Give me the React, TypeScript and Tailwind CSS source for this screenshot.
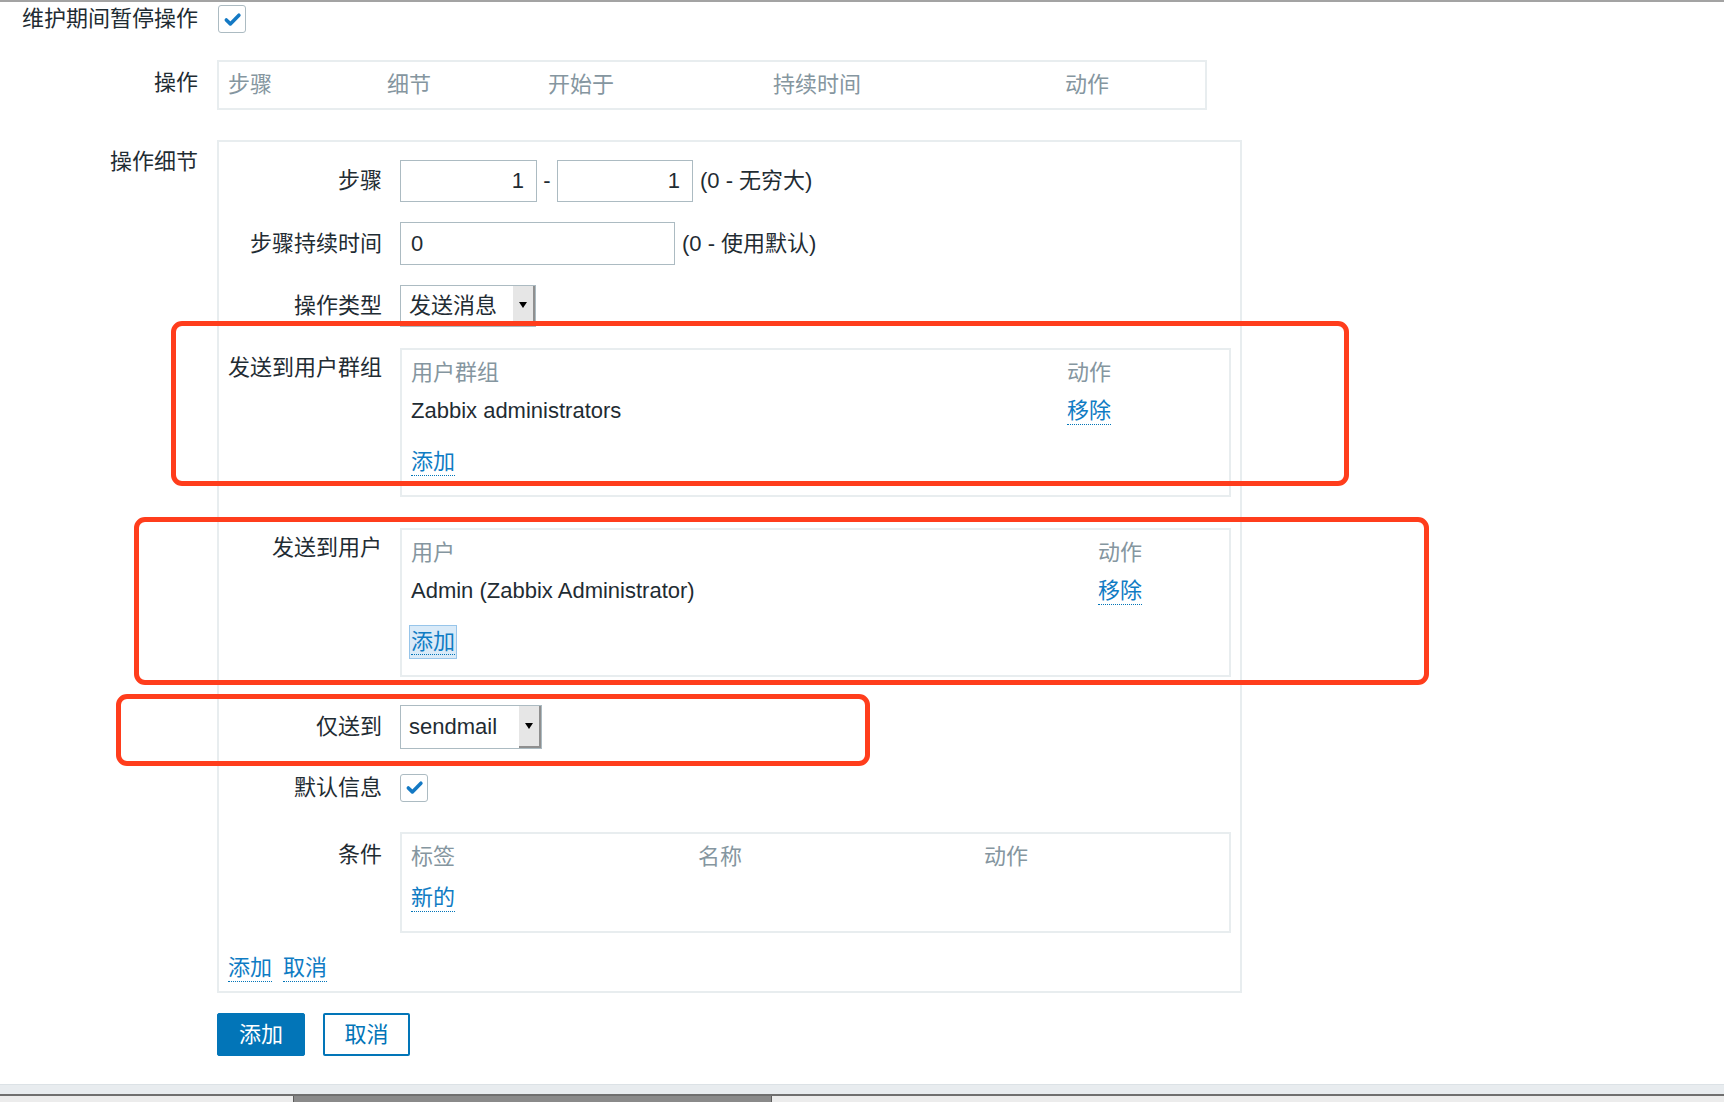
import React from "react";

function Check() {
  return (
    <span className="flex h-[28px] w-[28px] items-center justify-center rounded-[3px] border border-[#acbbc2] bg-white">
      <svg viewBox="0 0 16 16" className="h-[19px] w-[19px]">
        <path d="M2.8 8.4l3.4 3.3L13.4 4.4" fill="none" stroke="#1479c4" strokeWidth="3" strokeLinecap="round" strokeLinejoin="round" />
      </svg>
    </span>
  );
}

function Select({ value, className }: { value: string; className: string }) {
  return (
    <div className={"flex items-stretch border border-[#acbbc2] bg-white " + className}>
      <span className="flex flex-1 items-center pl-[8px]">{value}</span>
      <span className="flex w-[22px] items-center justify-center border-r-2 border-b-2 border-[#8f8f8f] bg-[#e6e6e6]">
        <span className="h-0 w-0 border-x-[4px] border-t-[6px] border-x-transparent border-t-black" />
      </span>
    </div>
  );
}

function Link({ children }: { children: React.ReactNode }) {
  return <span className="border-b border-dotted border-[#0275b8] leading-[26px] text-[#0f7cc4]">{children}</span>;
}

function Label({ children, className }: { children: React.ReactNode; className: string }) {
  return <div className={"w-[154px] shrink-0 text-right " + className}>{children}</div>;
}

export default function App() {
  return (
    <div className="relative flex h-[1102px] flex-col overflow-hidden border-t-2 border-[#a3a3a3] bg-white font-[family-name:'Liberation_Sans','Noto_Sans_CJK_SC',sans-serif] text-[22px] leading-[28px] text-[#1f2c33]">
      <div className="flex-1">
        {/* maintenance checkbox */}
        <div className="flex h-[34px] items-center">
          <div className="w-[198px] text-right">维护期间暂停操作</div>
          <div className="ml-[20px]">
            <Check />
          </div>
        </div>

        {/* operations list */}
        <div className="mt-[24px] flex items-start">
          <div className="w-[198px] pt-[9px] text-right">操作</div>
          <div className="ml-[19px] flex h-[50px] w-[990px] items-center border-2 border-[#e8edef] pl-[9px] text-[#8596a0]">
            <div className="w-[159px]">步骤</div>
            <div className="w-[161px]">细节</div>
            <div className="w-[225px]">开始于</div>
            <div className="w-[292px]">持续时间</div>
            <div>动作</div>
          </div>
        </div>

        {/* operation details */}
        <div className="mt-[30px] flex items-start">
          <div className="w-[198px] pt-[8px] text-right">操作细节</div>
          <div className="ml-[19px] w-[1025px] border-2 border-[#e8edef] px-[9px] pt-[18px] pb-[9px]">
            <div className="flex h-[42px] items-center">
              <Label className="">步骤</Label>
              <div className="ml-[18px] flex items-center">
                <div className="flex h-[42px] w-[137px] items-center justify-end border border-[#acbbc2] pr-[12px]">1</div>
                <span className="w-[20px] text-center">-</span>
                <div className="flex h-[42px] w-[136px] items-center justify-end border border-[#acbbc2] pr-[12px]">1</div>
                <span className="ml-[7px]">(0 - 无穷大)</span>
              </div>
            </div>

            <div className="mt-[20px] flex h-[43px] items-center">
              <Label className="">步骤持续时间</Label>
              <div className="ml-[18px] flex items-center">
                <div className="flex h-[43px] w-[275px] items-center border border-[#acbbc2] pl-[10px]">0</div>
                <span className="ml-[7px]">(0 - 使用默认)</span>
              </div>
            </div>

            <div className="mt-[20px] flex h-[42px] items-center">
              <Label className="">操作类型</Label>
              <div className="ml-[18px]">
                <Select value="发送消息" className="h-[42px] w-[136px]" />
              </div>
            </div>

            <div className="mt-[21px] flex items-start">
              <Label className="pt-[6px]">发送到用户群组</Label>
              <div className="ml-[18px] w-[831px] border-2 border-[#e8edef] px-[9px] pt-[7px] pb-[13px]">
                <div className="flex h-[32px] items-center text-[#8596a0]">
                  <div className="w-[656px]">用户群组</div>
                  <div>动作</div>
                </div>
                <div className="flex h-[44px] items-center">
                  <div className="w-[656px]">Zabbix administrators</div>
                  <Link>移除</Link>
                </div>
                <div className="mt-[9px] flex h-[40px] items-center">
                  <Link>添加</Link>
                </div>
              </div>
            </div>

            <div className="mt-[31px] flex items-start">
              <Label className="pt-[6px]">发送到用户</Label>
              <div className="ml-[18px] w-[831px] border-2 border-[#e8edef] px-[9px] pt-[7px] pb-[13px]">
                <div className="flex h-[32px] items-center text-[#8596a0]">
                  <div className="w-[687px]">用户</div>
                  <div>动作</div>
                </div>
                <div className="flex h-[44px] items-center">
                  <div className="w-[687px]">Admin (Zabbix Administrator)</div>
                  <Link>移除</Link>
                </div>
                <div className="mt-[9px] flex h-[40px] items-center">
                  <span className="-ml-[2px] border border-[#97c5ea] bg-[#d9eaf8] px-[1px] py-[2px]">
                    <Link>添加</Link>
                  </span>
                </div>
              </div>
            </div>

            <div className="mt-[28px] flex h-[44px] items-center">
              <Label className="">仅送到</Label>
              <div className="ml-[18px]">
                <Select value="sendmail" className="h-[44px] w-[142px]" />
              </div>
            </div>

            <div className="mt-[24px] flex h-[29px] items-center">
              <Label className="">默认信息</Label>
              <div className="ml-[18px]">
                <Check />
              </div>
            </div>

            <div className="mt-[30px] flex items-start">
              <Label className="pt-[9px]">条件</Label>
              <div className="ml-[18px] w-[831px] border-2 border-[#e8edef] px-[9px] pt-[7px] pb-[11px]">
                <div className="flex h-[32px] items-center text-[#8596a0]">
                  <div className="w-[287px]">标签</div>
                  <div className="w-[286px]">名称</div>
                  <div>动作</div>
                </div>
                <div className="mt-[3px] flex h-[44px] items-center">
                  <Link>新的</Link>
                </div>
              </div>
            </div>

            <div className="mt-[21px] flex h-[28px] items-center gap-[11px]">
              <Link>添加</Link>
              <Link>取消</Link>
            </div>
          </div>
        </div>

        {/* buttons */}
        <div className="ml-[217px] mt-[20px] flex gap-[18px]">
          <button className="h-[43px] w-[88px] rounded-[2px] border border-[#0275b8] bg-[#0275b8] text-white">添加</button>
          <button className="h-[43px] w-[87px] rounded-[2px] border-2 border-[#0275b8] bg-white text-[#0275b8]">取消</button>
        </div>
      </div>

      {/* window bottom / scrollbar */}
      <div className="h-[10px] border-t border-[#dce2e6] bg-[#e8ecef]" />
      <div className="h-[2px] bg-[#6f6f6f]" />
      <div className="flex h-[6px] bg-[#ececec]">
        <div className="ml-[293px] h-full w-[479px] border-x border-[#5c5c5c] bg-[#8a8a8a]" />
      </div>

      {/* annotation boxes */}
      <div className="absolute left-[171px] top-[319px] h-[165px] w-[1178px] rounded-[11px] border-[5px] border-[#ff3d1c]" />
      <div className="absolute left-[134px] top-[515px] h-[168px] w-[1295px] rounded-[11px] border-[5px] border-[#ff3d1c]" />
      <div className="absolute left-[116px] top-[692px] h-[72px] w-[754px] rounded-[11px] border-[5px] border-[#ff3d1c]" />
    </div>
  );
}
